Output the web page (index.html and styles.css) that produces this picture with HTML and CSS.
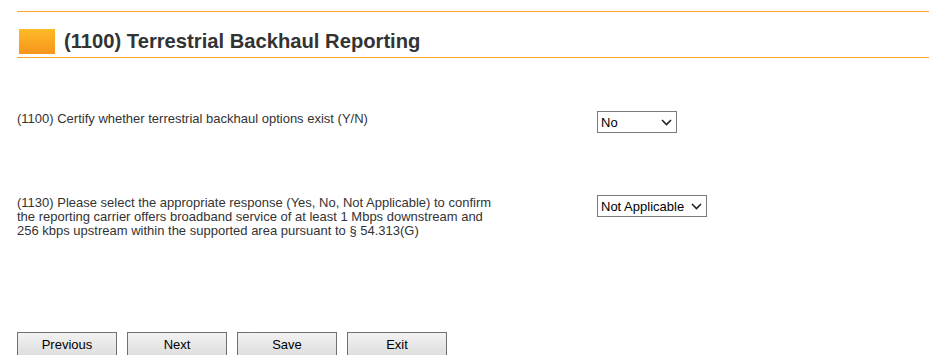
FILE: index.html
```html
<!DOCTYPE html>
<html lang="en">
<head>
  <meta charset="UTF-8">
  <title>Terrestrial Backhaul Reporting</title>
  <link rel="stylesheet" href="styles.css">
</head>
<body>

<div class="page">
  <div class="section-head">
    <span class="section-icon"></span>
    <h2>(1100) Terrestrial Backhaul Reporting</h2>
  </div>

  <div class="questions">
    <div class="question">
      <div class="label">(1100) Certify whether terrestrial backhaul options exist (Y/N)</div>
      <div class="answer">
        <span class="select-wrap">
          <select class="yn">
            <option></option>
            <option>Yes</option>
            <option selected>No</option>
          </select>
          <svg class="chevron" width="11" height="7" viewBox="0 0 11 7"><path d="M1 1 L5.5 5.5 L10 1" fill="none" stroke="#222" stroke-width="1.6"/></svg>
        </span>
      </div>
    </div>

    <div class="question">
      <div class="label">(1130) Please select the appropriate response (Yes, No, Not Applicable) to confirm the reporting carrier offers broadband service of at least 1 Mbps downstream and 256 kbps upstream within the supported area pursuant to &sect; 54.313(G)</div>
      <div class="answer">
        <span class="select-wrap">
          <select class="wide">
            <option></option>
            <option>Yes</option>
            <option>No</option>
            <option selected>Not Applicable</option>
          </select>
          <svg class="chevron" width="11" height="7" viewBox="0 0 11 7"><path d="M1 1 L5.5 5.5 L10 1" fill="none" stroke="#222" stroke-width="1.6"/></svg>
        </span>
      </div>
    </div>
  </div>

  <div class="buttons">
    <button>Previous</button>
    <button>Next</button>
    <button>Save</button>
    <button>Exit</button>
  </div>
</div>

</body>
</html>
```

FILE: styles.css
```css
body {
  margin: 0;
  font-family: "Liberation Sans", Arial, sans-serif;
  font-size: 13px;
  color: #333;
  background-color: #fff;
}

.page {
  padding: 11px 0 0 17px;
}

.section-head {
  display: flex;
  align-items: center;
  border-top: 1px solid #f7a325;
  border-bottom: 1px solid #f7a325;
  padding: 17px 0 3px 2px;
}

.section-icon {
  width: 36px;
  height: 25px;
  background: linear-gradient(#fdbb26, #f7941d);
  margin-right: 9px;
}

.section-head h2 {
  margin: 0;
  font-size: 20.2px;
  font-weight: bold;
  color: #333;
  line-height: 25px;
}

.questions {
  margin-top: 53px;
}

.question {
  display: flex;
  align-items: flex-start;
  height: 84px;
}

.label {
  width: 486px;
  margin-right: 94px;
  line-height: 14px;
  padding-top: 1px;
}

.select-wrap {
  position: relative;
  display: inline-block;
}

select {
  appearance: none;
  -webkit-appearance: none;
  font-family: "Liberation Sans", Arial, sans-serif;
  font-size: 13px;
  color: #000;
  background-color: #fff;
  border: 1px solid #7a7a7a;
  border-radius: 0;
  height: 22px;
  padding: 0 0 0 3px;
  margin: 0;
}

select.yn {
  width: 80px;
}

select.wide {
  width: 110px;
}

.chevron {
  position: absolute;
  right: 5px;
  top: 8px;
  pointer-events: none;
}

.buttons {
  display: flex;
  gap: 10px;
  margin-top: 53px;
}

.buttons button {
  width: 100px;
  height: 26px;
  font-family: "Liberation Sans", Arial, sans-serif;
  font-size: 13px;
  color: #000;
  background: linear-gradient(#f2f2f2, #dcdcdc);
  border: 1px solid #707070;
  border-radius: 0;
  padding: 0 0 2px;
}
```
